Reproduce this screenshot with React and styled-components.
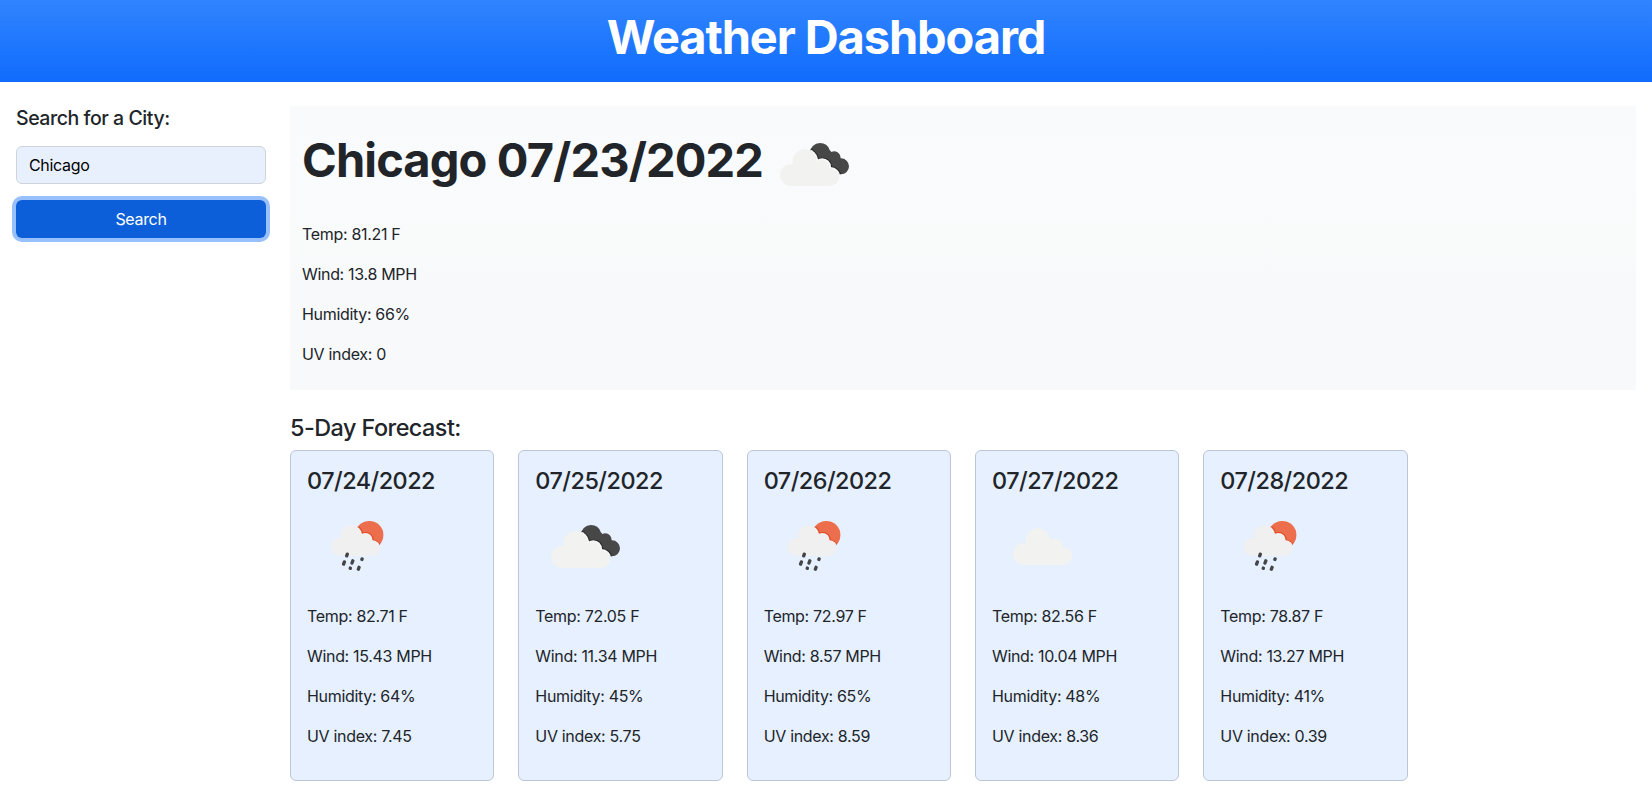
import React from "react";
import styled, { createGlobalStyle } from "styled-components";

const GlobalStyle = createGlobalStyle`
  *, *::before, *::after { box-sizing: border-box; }
  body {
    margin: 0;
    background: #fff;
    color: #212529;
    font-family: Inter, "Liberation Sans", sans-serif;
    font-size: 16px;
    line-height: 24px;
    letter-spacing: -0.32px;
    overflow: hidden;
    -webkit-font-smoothing: antialiased;
  }
  h1, h2, h3, p { margin: 0; }
`;

const Header = styled.header`
  padding: 8px 0 16px;
  text-align: center;
  color: #fff;
  background: linear-gradient(180deg, #3184fe, #106cfd);
`;

const Title = styled.h1`
  font-size: 47px;
  line-height: 57.6px;
  font-weight: 700;
  letter-spacing: -1.12px;
`;

const CurrentTitle = styled(Title)`
  margin: 0 1px 7px 0;
  letter-spacing: -0.88px;
`;

const Page = styled.div`
  display: grid;
  grid-template-columns: 250px 1fr;
  gap: 24px;
  padding: 24px 16px 0;
`;

const SearchForm = styled.form`
  display: flex;
  flex-direction: column;
  gap: 16px;
`;

const Label = styled.label`
  font-size: 19.5px;
  font-weight: 500;
  line-height: 24px;
  letter-spacing: -0.45px;
`;

const CityInput = styled.input`
  width: 100%;
  height: 38px;
  padding: 6px 12px;
  border: 1px solid #ced4da;
  border-radius: 6px;
  background: #e8f0fe;
  color: #000;
  font: inherit;
  letter-spacing: inherit;
  outline: none;
`;

const SearchButton = styled.button`
  height: 38px;
  border: 0;
  border-radius: 6px;
  background: #0d5fd9;
  color: #fff;
  font: inherit;
  letter-spacing: inherit;
  box-shadow: 0 0 0 4px #98c0fe;
`;

const Current = styled.section`
  padding: 8px 12px 24px;
  background: linear-gradient(180deg, #f9fafc, #f9fbfb 50%, #f8f9fb 60%, #f8f9fb);
`;

const CurrentHeading = styled.div`
  display: flex;
  align-items: center;
  height: 100px;
  margin-bottom: 8px;
`;

const Stats = styled.div`
  display: flex;
  flex-direction: column;
  gap: 16px;
`;

const ForecastTitle = styled.h2`
  margin: 24px 0 8px;
  font-size: 23.4px;
  font-weight: 500;
  line-height: 28.8px;
  letter-spacing: -0.53px;
`;

const Cards = styled.div`
  display: grid;
  grid-template-columns: repeat(6, 1fr);
  gap: 24px;
`;

const Card = styled.article`
  padding: 16px 16px 31.5px;
  border: 1px solid #bcc6d8;
  border-radius: 6px;
  background: #e6f0ff;
`;

const CardDate = styled.h3`
  font-size: 23.4px;
  font-weight: 500;
  line-height: 28.8px;
  letter-spacing: -0.5px;
`;

const Icon = styled.svg`
  display: block;
  flex: none;
  width: 100px;
  height: 100px;
  margin-bottom: ${(p) => p.$gap || "0"};
`;

const CloudShape = () => (
  <>
    <circle cx="27" cy="61" r="11" />
    <circle cx="40.8" cy="47.3" r="12.2" />
    <circle cx="58" cy="53" r="7.6" />
    <circle cx="66.2" cy="63" r="9" />
    <path d="M27 72V55L36 50L58 50L66.2 58V72Z" />
  </>
);

const CloudEdge = () => (
  <>
    <g fill="#222" opacity="0.8">
      <circle cx="41.6" cy="47.3" r="13.6" />
      <circle cx="58.6" cy="53" r="9.6" />
      <circle cx="66.6" cy="63" r="10.8" />
    </g>
    <g fill="#fbfbfb">
      <circle cx="41.2" cy="47.3" r="12.9" />
      <circle cx="58.2" cy="53" r="8.8" />
      <circle cx="66.4" cy="63" r="9.9" />
    </g>
  </>
);

const drops = [
  [40, 59, 5],
  [37, 67, 5.6],
  [45.4, 65.9, 5.6],
  [55, 63.2, 3.8],
  [43.3, 72.2, 3.4],
  [51.7, 72.3, 5.2],
];

function WeatherIcon({ kind, gap }) {
  if (kind === "broken") {
    return (
      <Icon viewBox="0 0 100 100" $gap={gap}>
        <clipPath id="dark-cloud">
          <circle cx="56" cy="39.2" r="10.2" />
          <circle cx="70.3" cy="43.6" r="6.3" />
          <circle cx="77" cy="52.3" r="8" />
          <path d="M56 49L64 34L70 41L77 46V60L68 58Z" />
        </clipPath>
        <g clipPath="url(#dark-cloud)">
          <rect width="100" height="100" fill="#484849" />
          <CloudEdge />
        </g>
        <g fill="#f2f2f0"><CloudShape /></g>
      </Icon>
    );
  }
  if (kind === "rain") {
    return (
      <Icon viewBox="0 0 100 100" $gap={gap}>
        <clipPath id="sun"><circle cx="62.3" cy="39" r="14.1" /></clipPath>
        <g clipPath="url(#sun)">
          <rect width="100" height="100" fill="#ec6e4c" />
          <g transform="translate(10.4 0.4) scale(0.825)">
            <g fill="#dc4a28">
              <circle cx="41.6" cy="47.3" r="13.8" />
              <circle cx="58.6" cy="53" r="9.7" />
              <circle cx="66.6" cy="63" r="10.9" />
            </g>
            <g fill="#f7f3f2">
              <circle cx="41.2" cy="47.3" r="12.9" />
              <circle cx="58.2" cy="53" r="8.7" />
              <circle cx="66.4" cy="63" r="9.9" />
            </g>
          </g>
        </g>
        <g fill="#f0f0f0" transform="translate(10.4 0.4) scale(0.825)"><CloudShape /></g>
        {drops.map(([x, y, h]) => (
          <rect key={x} x={x - 1.65} y={y - h / 2} width="3.3" height={h} rx="1.3" fill="#444446" transform={`rotate(20 ${x} ${y})`} />
        ))}
      </Icon>
    );
  }
  return (
    <Icon viewBox="0 0 100 100" $gap={gap}>
      <g fill="#f2f2f0" transform="translate(5 -3)"><CloudShape /></g>
    </Icon>
  );
}

const forecast = [
  { date: "07/24/2022", kind: "rain", temp: "82.71", wind: "15.43", humidity: 64, uv: "7.45" },
  { date: "07/25/2022", kind: "broken", temp: "72.05", wind: "11.34", humidity: 45, uv: "5.75" },
  { date: "07/26/2022", kind: "rain", temp: "72.97", wind: "8.57", humidity: 65, uv: "8.59" },
  { date: "07/27/2022", kind: "cloud", temp: "82.56", wind: "10.04", humidity: 48, uv: "8.36" },
  { date: "07/28/2022", kind: "rain", temp: "78.87", wind: "13.27", humidity: 41, uv: "0.39" },
];

const Conditions = ({ temp, wind, humidity, uv }) => (
  <Stats>
    <p>{`Temp: ${temp} F`}</p>
    <p>{`Wind: ${wind} MPH`}</p>
    <p>{`Humidity: ${humidity}%`}</p>
    <p>{`UV index: ${uv}`}</p>
  </Stats>
);

export default function App() {
  return (
    <>
      <GlobalStyle />
      <Header><Title>Weather Dashboard</Title></Header>
      <Page>
        <SearchForm onSubmit={(e) => e.preventDefault()}>
          <Label htmlFor="city">Search for a City:</Label>
          <CityInput id="city" defaultValue="Chicago" />
          <SearchButton type="submit">Search</SearchButton>
        </SearchForm>
        <main>
          <Current>
            <CurrentHeading>
              <CurrentTitle as="h2">Chicago 07/23/2022</CurrentTitle>
              <WeatherIcon kind="broken" />
            </CurrentHeading>
            <Conditions temp="81.21" wind="13.8" humidity={66} uv="0" />
          </Current>
          <ForecastTitle>5-Day Forecast:</ForecastTitle>
          <Cards>
            {forecast.map((day) => (
              <Card key={day.date}>
                <CardDate>{day.date}</CardDate>
                <WeatherIcon kind={day.kind} gap="8px" />
                <Conditions {...day} />
              </Card>
            ))}
          </Cards>
        </main>
      </Page>
    </>
  );
}
